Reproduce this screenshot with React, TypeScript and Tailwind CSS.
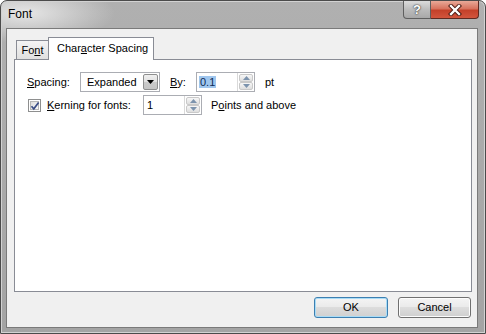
import React from 'react'

function Spinner() {
  return (
    <div className="flex h-full w-[17px] flex-col border-l border-[#d9d9d9] p-[1px]">
      <div className="flex flex-1 items-center justify-center rounded-[2px] border border-[#c9c9c9] bg-gradient-to-b from-[#f7f7f7] to-[#dedede]">
        <svg width="7" height="4" viewBox="0 0 7 4">
          <path d="M0 4 L3.5 0 L7 4 Z" fill="#7c93ad" />
        </svg>
      </div>
      <div className="flex flex-1 items-center justify-center rounded-[2px] border border-[#c9c9c9] bg-gradient-to-b from-[#f7f7f7] to-[#dedede]">
        <svg width="7" height="4" viewBox="0 0 7 4">
          <path d="M0 0 L3.5 4 L7 0 Z" fill="#7c93ad" />
        </svg>
      </div>
    </div>
  )
}

function Checkbox() {
  return (
    <div className="flex h-[13px] w-[13px] items-center justify-center border border-[#8e8f8f] bg-white">
      <div className="relative h-[9px] w-[9px] border border-[#b7b7b7] bg-gradient-to-br from-[#dcdcdc] to-[#fbfbfb]">
        <svg className="absolute -left-[2px] -top-[2px]" width="12" height="12" viewBox="0 0 12 12">
          <path d="M2.5 6.2 L4.8 8.8 L9.6 2.6" stroke="#3a4d86" strokeWidth="1.7" fill="none" />
        </svg>
      </div>
    </div>
  )
}

function DialogButton({ label, primary }: { label: string; primary?: boolean }) {
  return (
    <button
      className={
        primary
          ? 'h-[21px] w-[74px] rounded-[3px] border border-[#3c7fb1] bg-[linear-gradient(#f4f4f4_0%,#ebebeb_45%,#dcdcdc_50%,#d0d0d0_100%)] text-[11px] shadow-[inset_0_0_0_1px_#a9dcf6]'
          : 'h-[21px] w-[73px] rounded-[3px] border border-[#707070] bg-[linear-gradient(#f4f4f4_0%,#ebebeb_45%,#dddddd_50%,#cfcfcf_100%)] text-[11px] shadow-[inset_0_0_0_1px_#fcfcfc]'
      }
    >
      {label}
    </button>
  )
}

export default function App() {
  return (
    <div className="h-[334px] w-[486px] font-['Liberation_Sans',Arial,sans-serif] text-[11px] text-black">
      <div className="relative flex h-full w-full flex-col rounded-t-[7px] border border-[#4b4b4b] bg-[radial-gradient(ellipse_90px_30px_at_24px_12px,rgba(236,236,236,0.9),rgba(236,236,236,0)),linear-gradient(#b0b0b0,#a4a4a4)] shadow-[inset_0_0_0_1px_#d2d2d2]">
        {/* title bar */}
        <div className="flex h-[27px] items-center pl-[7px] pb-[1px] text-[12px]">Font</div>

        {/* caption buttons */}
        <div className="absolute right-[6px] top-0 flex h-[18px]">
          <div className="flex w-[28px] items-center justify-center rounded-bl-[4px] border border-t-0 border-[#5f5f5f] bg-gradient-to-b from-[#dcdcdc] via-[#bcbcbc] to-[#a8a8a8] text-[13px] font-bold text-white [text-shadow:0_0_2px_#333,0_0_1px_#333]">
            ?
          </div>
          <div className="flex w-[48px] items-center justify-center rounded-br-[4px] border border-l-0 border-t-0 border-[#5f2a22] bg-[linear-gradient(#e9a998_0%,#d7735e_45%,#c4412a_55%,#d2553d_100%)]">
            <svg width="14" height="12" viewBox="0 0 14 12">
              <path d="M3 2 L11 10 M11 2 L3 10" stroke="#4a1a12" strokeWidth="4.2" strokeLinecap="square" />
              <path d="M3 2 L11 10 M11 2 L3 10" stroke="#ffffff" strokeWidth="2.3" strokeLinecap="square" />
            </svg>
          </div>
        </div>

        {/* client area */}
        <div className="ml-[5px] h-[300px] w-[472px] border border-[#7a7a7a] bg-[#f0f0f0] pl-[7px] pt-[8px]">
          {/* tabs */}
          <div className="relative z-10 flex h-[22px] items-end pl-[2px]">
            <div className="flex h-[19px] w-[32px] items-center justify-center border-l border-t border-[#898c95] bg-gradient-to-b from-[#f4f4f4] to-[#e0e0e0] pt-[1px]">
              Fo<span className="underline">n</span>t
            </div>
            <div className="-mb-[1px] flex h-[23px] w-[106px] items-center border border-b-0 border-[#898c95] bg-white pl-[8px] pb-[1px]">
              Char<span className="underline">a</span>cter Spacing
            </div>
          </div>

          {/* tab panel */}
          <div className="h-[233px] w-[458px] border border-[#898c95] bg-white pl-[12px] pt-[12px]">
            <div className="flex h-[20px] items-center">
              <div className="w-[53px]">
                <span className="underline">S</span>pacing:
              </div>
              <div className="flex h-[20px] w-[80px] items-center border border-[#abadb3] bg-white">
                <div className="flex-1 pl-[6px]">Expanded</div>
                <div className="mr-[1px] flex h-[16px] w-[15px] items-center justify-center rounded-[2px] border border-[#8e8f8f] bg-[linear-gradient(#f0f0f0_0%,#e0e0e0_50%,#cacaca_51%,#c4c4c4_100%)]">
                  <svg width="7" height="4" viewBox="0 0 7 4">
                    <path d="M0 0 L7 0 L3.5 4 Z" fill="#000000" />
                  </svg>
                </div>
              </div>
              <div className="ml-[10px] w-[26px]">
                <span className="underline">B</span>y:
              </div>
              <div className="flex h-[20px] w-[59px] items-center border border-[#abadb3] bg-white">
                <div className="flex-1 pl-[2px]">
                  <span className="bg-[#9fc6ee] px-[1px] text-[#0f2b55]">0.1</span>
                </div>
                <Spinner />
              </div>
              <div className="ml-[10px]">pt</div>
            </div>

            <div className="mt-[3px] flex h-[20px] items-center">
              <div className="ml-[1px]">
                <Checkbox />
              </div>
              <div className="ml-[6px] w-[96px]">
                <span className="underline">K</span>erning for fonts:
              </div>
              <div className="flex h-[20px] w-[59px] items-center border border-[#abadb3] bg-white">
                <div className="flex-1 pl-[3px]">1</div>
                <Spinner />
              </div>
              <div className="ml-[9px]">
                P<span className="underline">o</span>ints and above
              </div>
            </div>
          </div>

          {/* buttons */}
          <div className="mt-[5px] flex w-[457px] justify-end gap-[10px]">
            <DialogButton label="OK" primary />
            <DialogButton label="Cancel" />
          </div>
        </div>
      </div>
    </div>
  )
}
